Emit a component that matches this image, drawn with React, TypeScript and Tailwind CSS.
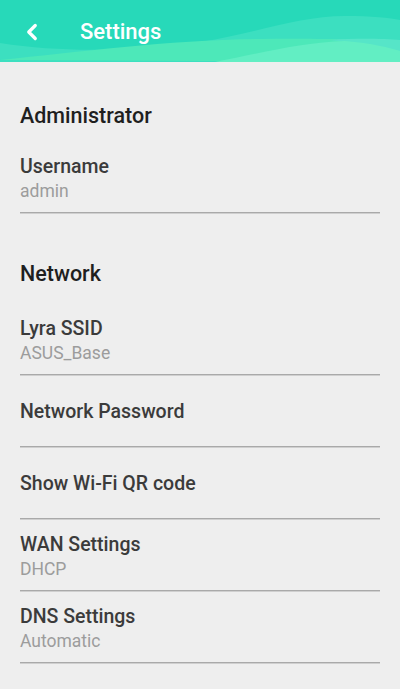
import { ChevronLeft } from 'lucide-react';

type Row = { title: string; value?: string };

const ADMIN_ROWS: Row[] = [{ title: 'Username', value: 'admin' }];

const NETWORK_ROWS: Row[] = [
  { title: 'Lyra SSID', value: 'ASUS_Base' },
  { title: 'Network Password' },
  { title: 'Show Wi-Fi QR code' },
  { title: 'WAN Settings', value: 'DHCP' },
  { title: 'DNS Settings', value: 'Automatic' },
];

const HeaderWaves = () => (
  <svg className="absolute inset-0 h-full w-full" viewBox="0 0 400 62" preserveAspectRatio="none">
    <rect width="400" height="62" fill="#27d9b9" />
    <path d="M0,43 C70,54 140,50 200,42 C260,32 300,16 345,16 C372,16 390,18 400,20 L400,62 L0,62 Z" fill="#3cdfc0" />
    <path d="M0,60 C80,52 170,40 260,39 C320,38 370,40 400,41 L400,62 Z" fill="#4de8b9" />
    <path d="M330,40 C360,38 385,39 400,40 L400,52 C380,47 355,43 330,40 Z" fill="#56e5c8" />
    <path d="M215,62 C265,52 305,42 345,41 C372,43 390,48 400,51 L400,62 Z" fill="#62eec3" />
  </svg>
);

const SettingRow = ({ title, value }: Row) => (
  <div>
    {value ? (
      <div className="pt-[13px] pb-[9px]">
        <div className="text-[19.5px] font-medium leading-6 text-[#3b3b3b]">{title}</div>
        <div className="text-[17.5px] leading-6 text-[#9c9c9c]">{value}</div>
      </div>
    ) : (
      <div className="flex h-[70px] items-center pt-[2px]">
        <div className="text-[19.5px] font-medium leading-6 text-[#3b3b3b]">{title}</div>
      </div>
    )}
    <div className="border-t border-b border-t-[#a9a9a9] border-b-[#cfcfcf]" />
  </div>
);

export default function App() {
  return (
    <div className="min-h-[689px] w-[400px] bg-[#eeeeee] font-['Roboto',sans-serif]">
      <header className="relative h-[62px] overflow-hidden">
        <HeaderWaves />
        <div className="relative flex h-full items-center pt-[1px]">
          <ChevronLeft className="ml-[19px] h-[26px] w-[26px] text-white" strokeWidth={3} />
          <h1 className="ml-[35px] text-[22px] font-medium leading-7 text-white">Settings</h1>
        </div>
      </header>

      <main className="px-5">
        <h2 className="pt-[42px] text-[21.5px] font-medium leading-6 text-[#1f1f1f]">Administrator</h2>
        <div className="mt-[14px]">
          {ADMIN_ROWS.map((row) => (
            <SettingRow key={row.title} {...row} />
          ))}
        </div>

        <h2 className="mt-[48px] text-[21.5px] font-medium leading-6 text-[#1f1f1f]">Network</h2>
        <div className="mt-[18px]">
          {NETWORK_ROWS.map((row) => (
            <SettingRow key={row.title} {...row} />
          ))}
        </div>
      </main>
    </div>
  );
}
